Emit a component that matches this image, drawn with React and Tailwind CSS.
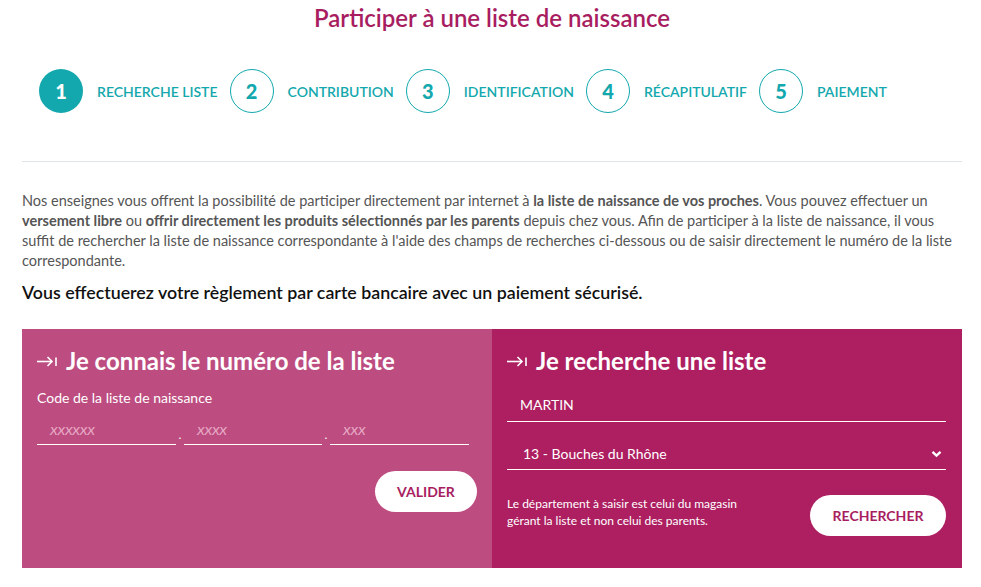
import React from "react";

const steps = [
  { n: "1", label: "RECHERCHE LISTE", active: true },
  { n: "2", label: "CONTRIBUTION" },
  { n: "3", label: "IDENTIFICATION" },
  { n: "4", label: "RÉCAPITULATIF" },
  { n: "5", label: "PAIEMENT" },
];

function ArrowIn() {
  return (
    <svg width="21" height="12" viewBox="0 0 21 12" className="mr-[8px] shrink-0" fill="none" stroke="white" strokeWidth="1.6">
      <path d="M0 6.5 H15" />
      <path d="M10.5 2 L15 6.5 L10.5 11" />
      <path d="M19 2.5 V11" />
    </svg>
  );
}

function Chevron() {
  return (
    <svg width="11" height="8" viewBox="0 0 11 8" fill="none" stroke="white" strokeWidth="2.4">
      <path d="M1.5 1.8 L5.5 5.6 L9.5 1.8" />
    </svg>
  );
}

export default function App() {
  return (
    <div className="w-[981px] h-[587px] bg-white overflow-hidden font-['Lato','Open_Sans',sans-serif]">
      <div className="mx-[22px] w-[940px]">
        <h1 className="mt-[4px] text-center text-[24px] leading-[28px] font-semibold text-[#a81d5f]">
          Participer à une liste de naissance
        </h1>

        <div className="mt-[37px] pl-[17px] flex items-center h-[44px]">
          {steps.map((s) => (
            <div key={s.n} className="flex items-center">
              <div
                className={
                  s.active
                    ? "w-[44px] h-[44px] rounded-full bg-[#13a8ad] text-white flex items-center justify-center text-[20px] font-black"
                    : "w-[44px] h-[44px] rounded-full border border-[#13a8ad] text-[#13a8ad] flex items-center justify-center text-[20px] font-black"
                }
              >
                {s.n}
              </div>
              <span className="ml-[14px] mr-[12px] text-[14px] font-semibold text-[#13a8ad]">
                {s.label}
              </span>
            </div>
          ))}
        </div>

        <div className="mt-[48px] h-px bg-[#dfe5ea]" />

        <p className="mt-[29px] text-[14.5px] leading-[20px] text-[#555]">
          Nos enseignes vous offrent la possibilité de participer directement par internet à{" "}
          <b className="font-bold">la liste de naissance de vos proches</b>. Vous pouvez effectuer un{" "}
          <b className="font-bold">versement libre</b> ou <b className="font-bold">offrir directement les produits sélectionnés par les parents</b> depuis chez vous. Afin de participer à la liste de naissance, il vous suffit de rechercher la liste de naissance correspondante à l'aide des champs de recherches ci-dessous ou de saisir directement le numéro de la liste correspondante.
        </p>

        <p className="mt-[9px] text-[17.8px] leading-[24px] font-semibold text-[#111]">
          Vous effectuerez votre règlement par carte bancaire avec un paiement sécurisé.
        </p>

        <div className="mt-[25px] flex h-[239px]">
          <div className="w-[470px] bg-[#bd4d80] pt-[18px] px-[15px]">
            <h2 className="flex items-center text-[24px] leading-[28px] font-bold text-white">
              <ArrowIn />
              Je connais le numéro de la liste
            </h2>
            <div className="mt-[13px] text-[14px] leading-[20px] text-white">Code de la liste de naissance</div>
            <div className="mt-[10px] flex items-end">
              <div className="w-[139px] h-[27px] border-b border-white pl-[13px] flex items-center text-[12px] italic font-semibold text-[#e6a7c4]">XXXXXX</div>
              <span className="w-[8px] text-center text-[12px] leading-[20px] text-white">.</span>
              <div className="w-[138px] h-[27px] border-b border-white pl-[13px] flex items-center text-[12px] italic font-semibold text-[#e6a7c4]">XXXX</div>
              <span className="w-[8px] text-center text-[12px] leading-[20px] text-white">.</span>
              <div className="w-[139px] h-[27px] border-b border-white pl-[13px] flex items-center text-[12px] italic font-semibold text-[#e6a7c4]">XXX</div>
            </div>
            <div className="mt-[26px] flex justify-end">
              <button className="w-[102px] h-[41px] rounded-full bg-white text-[14px] font-bold text-[#a81d5f]">VALIDER</button>
            </div>
          </div>

          <div className="w-[470px] bg-[#ad1f61] pt-[18px] pl-[15px] pr-[16px]">
            <h2 className="flex items-center text-[24px] leading-[28px] font-bold text-white">
              <ArrowIn />
              Je recherche une liste
            </h2>
            <div className="mt-[16px] h-[31px] border-b border-white pl-[13px] pb-[4px] flex items-center text-[14px] text-white">MARTIN</div>
            <div className="mt-[16px] h-[32px] border-b border-white pl-[16px] pr-[4px] flex items-center justify-between text-[14px] text-white">
              <span>13 - Bouches du Rhône</span>
              <Chevron />
            </div>
            <div className="mt-[25px] flex items-start justify-between">
              <p className="text-[12px] leading-[17px] text-white">
                Le département à saisir est celui du magasin
                <br />
                gérant la liste et non celui des parents.
              </p>
              <button className="w-[136px] h-[41px] rounded-full bg-white text-[14px] font-bold text-[#a81d5f]">RECHERCHER</button>
            </div>
          </div>
        </div>
      </div>
    </div>
  );
}
